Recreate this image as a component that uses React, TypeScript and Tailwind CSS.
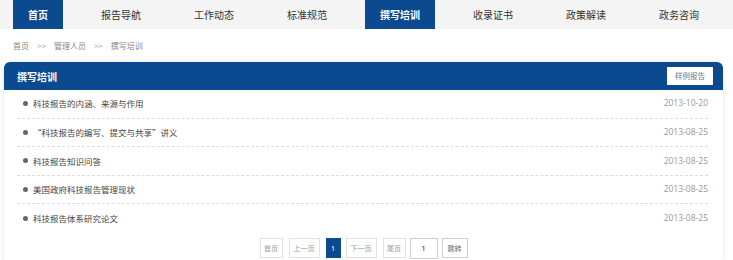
import React from "react";

const font = { fontFamily: '"Noto Sans CJK SC", "Noto Sans", sans-serif' };

const navItems: { label: string; active?: boolean }[] = [
  { label: "首页", active: true },
  { label: "报告导航" },
  { label: "工作动态" },
  { label: "标准规范" },
  { label: "撰写培训", active: true },
  { label: "收录证书" },
  { label: "政策解读" },
  { label: "政务咨询" },
];

const rows = [
  { t: "科技报告的内涵、来源与作用", d: "2013-10-20" },
  { t: "“科技报告的编写、提交与共享”讲义", d: "2013-08-25" },
  { t: "科技报告知识问答", d: "2013-08-25" },
  { t: "美国政府科技报告管理现状", d: "2013-08-25" },
  { t: "科技报告体系研究论文", d: "2013-08-25" },
];

export default function App() {
  return (
    <div className="w-[733px] h-[260px] overflow-hidden bg-white" style={font}>
      <div className="h-[29px] bg-[#f4f4f4] flex pl-[13px] gap-[23px]">
        {navItems.map((n) => (
          <div
            key={n.label}
            className={`px-[15px] h-[29px] flex items-center justify-center text-[10px] ${
              n.active ? "bg-[#0b4a8e] text-white font-bold" : "text-[#333]"
            }`}
          >
            {n.label}
          </div>
        ))}
      </div>
      <div className="h-[33px] flex items-center pl-[13px] text-[8px] text-[#888]">
        <span>首页</span>
        <span className="mx-[8px] text-[#aaa]">&gt;&gt;</span>
        <span>管理人员</span>
        <span className="mx-[8px] text-[#aaa]">&gt;&gt;</span>
        <span>撰写培训</span>
      </div>
      <div className="ml-[4px] w-[719px] h-[200px] bg-white rounded-t-[6px] shadow-[0_0_5px_rgba(30,80,160,0.14)]">
        <div className="h-[28px] bg-[#0b4a8e] rounded-t-[6px] flex items-center justify-between pl-[13px] pr-[10px]">
          <span className="text-white text-[10px] font-bold">撰写培训</span>
          <span className="w-[46px] h-[18px] bg-white flex items-center justify-center text-[7.5px] text-[#6b7a90]">
            样例报告
          </span>
        </div>
        <div className="ml-[13px] mr-[15px]">
          {rows.map((r, i) => (
            <div
              key={i}
              className={`h-[28.6px] flex items-center justify-between ${
                i < rows.length - 1 ? "border-b border-dashed border-[#dcdcdc]" : ""
              }`}
            >
              <div className="flex items-center">
                <span className="ml-[6px] w-[5px] h-[5px] rounded-full bg-[#666]" />
                <span className="ml-[5px] text-[8.5px] text-[#444]">{r.t}</span>
              </div>
              <span className="text-[8.5px] text-[#999]" style={{ fontFamily: '"Open Sans", sans-serif' }}>
                {r.d}
              </span>
            </div>
          ))}
        </div>
        <div className="mt-[5px] flex justify-center items-center text-[7px] text-[#999]">
          <span className="w-[23px] h-[20px] border border-[#e2e2e2] flex items-center justify-center">首页</span>
          <span className="ml-[6px] w-[31px] h-[20px] border border-[#e2e2e2] flex items-center justify-center">上一页</span>
          <span className="ml-[6px] w-[15px] h-[20px] bg-[#0b4a8e] text-white text-[8px] flex items-center justify-center" style={{ fontFamily: '"Open Sans", sans-serif' }}>1</span>
          <span className="ml-[5px] w-[31px] h-[20px] border border-[#e2e2e2] flex items-center justify-center">下一页</span>
          <span className="ml-[6px] w-[23px] h-[20px] border border-[#e2e2e2] flex items-center justify-center">尾页</span>
          <span className="ml-[4px] w-[28px] h-[21px] border border-[#cfcfcf] flex items-center justify-center text-[#333] text-[8px]" style={{ fontFamily: '"Open Sans", sans-serif' }}>1</span>
          <span className="ml-[4px] w-[26px] h-[20px] border border-[#cfcfcf] flex items-center justify-center text-[#666]">跳转</span>
        </div>
      </div>
    </div>
  );
}
